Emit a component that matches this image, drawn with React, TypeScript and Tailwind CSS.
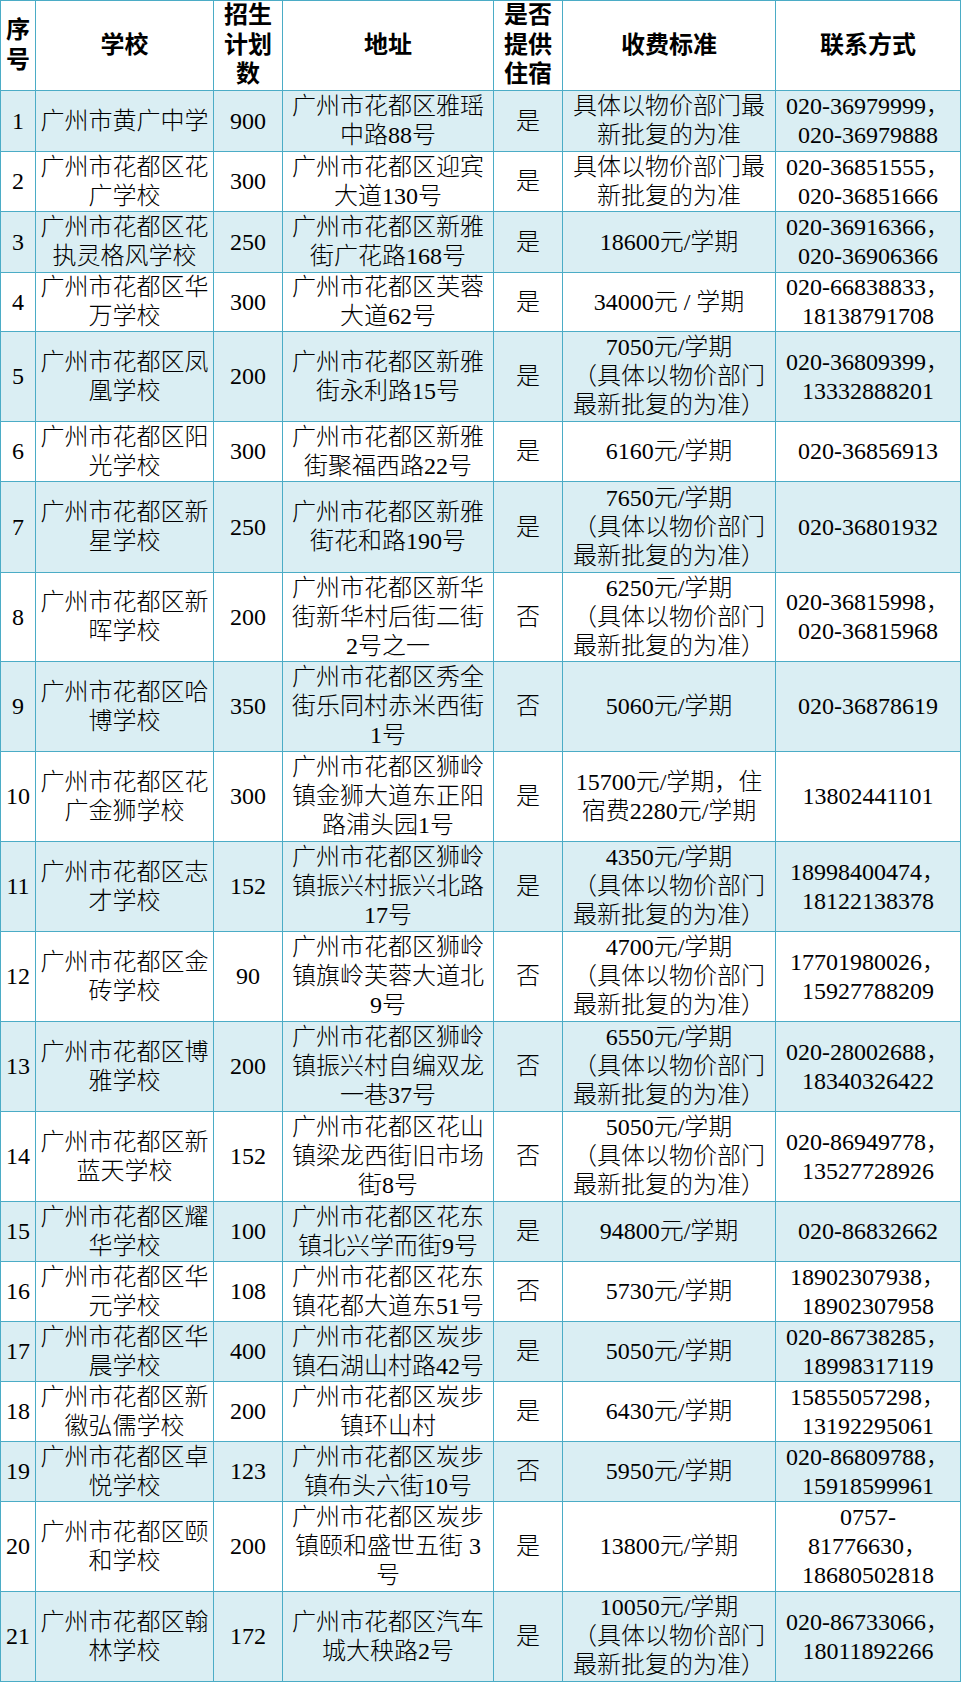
import React from "react";

type Row = {
  n: string;
  school: string[];
  plan: string;
  addr: string[];
  dorm: string;
  fee: string[];
  contact: string[];
  h: string;
};

const FEE_NOTE = ["（具体以物价部门", "最新批复的为准）"];

const rows: Row[] = [
  { n: "1", school: ["广州市黄广中学"], plan: "900", addr: ["广州市花都区雅瑶", "中路88号"], dorm: "是", fee: ["具体以物价部门最", "新批复的为准"], contact: ["020-36979999，", "020-36979888"], h: "h-[60px]" },
  { n: "2", school: ["广州市花都区花", "广学校"], plan: "300", addr: ["广州市花都区迎宾", "大道130号"], dorm: "是", fee: ["具体以物价部门最", "新批复的为准"], contact: ["020-36851555，", "020-36851666"], h: "h-[59px]" },
  { n: "3", school: ["广州市花都区花", "执灵格风学校"], plan: "250", addr: ["广州市花都区新雅", "街广花路168号"], dorm: "是", fee: ["18600元/学期"], contact: ["020-36916366，", "020-36906366"], h: "h-[60px]" },
  { n: "4", school: ["广州市花都区华", "万学校"], plan: "300", addr: ["广州市花都区芙蓉", "大道62号"], dorm: "是", fee: ["34000元 / 学期"], contact: ["020-66838833，", "18138791708"], h: "h-[58px]" },
  { n: "5", school: ["广州市花都区凤", "凰学校"], plan: "200", addr: ["广州市花都区新雅", "街永利路15号"], dorm: "是", fee: ["7050元/学期", ...FEE_NOTE], contact: ["020-36809399，", "13332888201"], h: "h-[89px]" },
  { n: "6", school: ["广州市花都区阳", "光学校"], plan: "300", addr: ["广州市花都区新雅", "街聚福西路22号"], dorm: "是", fee: ["6160元/学期"], contact: ["020-36856913"], h: "h-[59px]" },
  { n: "7", school: ["广州市花都区新", "星学校"], plan: "250", addr: ["广州市花都区新雅", "街花和路190号"], dorm: "是", fee: ["7650元/学期", ...FEE_NOTE], contact: ["020-36801932"], h: "h-[90px]" },
  { n: "8", school: ["广州市花都区新", "晖学校"], plan: "200", addr: ["广州市花都区新华", "街新华村后街二街", "2号之一"], dorm: "否", fee: ["6250元/学期", ...FEE_NOTE], contact: ["020-36815998，", "020-36815968"], h: "h-[88px]" },
  { n: "9", school: ["广州市花都区哈", "博学校"], plan: "350", addr: ["广州市花都区秀全", "街乐同村赤米西街", "1号"], dorm: "否", fee: ["5060元/学期"], contact: ["020-36878619"], h: "h-[89px]" },
  { n: "10", school: ["广州市花都区花", "广金狮学校"], plan: "300", addr: ["广州市花都区狮岭", "镇金狮大道东正阳", "路浦头园1号"], dorm: "是", fee: ["15700元/学期，住", "宿费2280元/学期"], contact: ["13802441101"], h: "h-[89px]" },
  { n: "11", school: ["广州市花都区志", "才学校"], plan: "152", addr: ["广州市花都区狮岭", "镇振兴村振兴北路", "17号"], dorm: "是", fee: ["4350元/学期", ...FEE_NOTE], contact: ["18998400474，", "18122138378"], h: "h-[89px]" },
  { n: "12", school: ["广州市花都区金", "砖学校"], plan: "90", addr: ["广州市花都区狮岭", "镇旗岭芙蓉大道北", "9号"], dorm: "否", fee: ["4700元/学期", ...FEE_NOTE], contact: ["17701980026，", "15927788209"], h: "h-[89px]" },
  { n: "13", school: ["广州市花都区博", "雅学校"], plan: "200", addr: ["广州市花都区狮岭", "镇振兴村自编双龙", "一巷37号"], dorm: "否", fee: ["6550元/学期", ...FEE_NOTE], contact: ["020-28002688，", "18340326422"], h: "h-[89px]" },
  { n: "14", school: ["广州市花都区新", "蓝天学校"], plan: "152", addr: ["广州市花都区花山", "镇梁龙西街旧市场", "街8号"], dorm: "否", fee: ["5050元/学期", ...FEE_NOTE], contact: ["020-86949778，", "13527728926"], h: "h-[89px]" },
  { n: "15", school: ["广州市花都区耀", "华学校"], plan: "100", addr: ["广州市花都区花东", "镇北兴学而街9号"], dorm: "是", fee: ["94800元/学期"], contact: ["020-86832662"], h: "h-[59px]" },
  { n: "16", school: ["广州市花都区华", "元学校"], plan: "108", addr: ["广州市花都区花东", "镇花都大道东51号"], dorm: "否", fee: ["5730元/学期"], contact: ["18902307938，", "18902307958"], h: "h-[59px]" },
  { n: "17", school: ["广州市花都区华", "晨学校"], plan: "400", addr: ["广州市花都区炭步", "镇石湖山村路42号"], dorm: "是", fee: ["5050元/学期"], contact: ["020-86738285，", "18998317119"], h: "h-[59px]" },
  { n: "18", school: ["广州市花都区新", "徽弘儒学校"], plan: "200", addr: ["广州市花都区炭步", "镇环山村"], dorm: "是", fee: ["6430元/学期"], contact: ["15855057298，", "13192295061"], h: "h-[59px]" },
  { n: "19", school: ["广州市花都区卓", "悦学校"], plan: "123", addr: ["广州市花都区炭步", "镇布头六街10号"], dorm: "否", fee: ["5950元/学期"], contact: ["020-86809788，", "15918599961"], h: "h-[59px]" },
  { n: "20", school: ["广州市花都区颐", "和学校"], plan: "200", addr: ["广州市花都区炭步", "镇颐和盛世五街 3", "号"], dorm: "是", fee: ["13800元/学期"], contact: ["0757-", "81776630，", "18680502818"], h: "h-[89px]" },
  { n: "21", school: ["广州市花都区翰", "林学校"], plan: "172", addr: ["广州市花都区汽车", "城大秧路2号"], dorm: "是", fee: ["10050元/学期", ...FEE_NOTE], contact: ["020-86733066，", "18011892266"], h: "h-[89px]" },
];

const GRID =
  "grid grid-cols-[34px_177px_68px_210px_68px_212px_184px] gap-px";

function Cell({ lines, bg, bold }: { lines: string[]; bg: string; bold?: boolean }) {
  return (
    <div
      className={`${bg} flex flex-col items-center justify-center text-center overflow-hidden ${
        bold ? "font-bold leading-[29.5px]" : "font-light leading-[29px]"
      }`}
    >
      {lines.map((l, i) => (
        <div key={i} className="whitespace-pre">
          {l}
        </div>
      ))}
    </div>
  );
}

export default function App() {
  return (
    <div className="w-[961px] bg-white">
      <div className="flex flex-col gap-px p-px bg-[#4bacc6] text-black text-[24px] font-['Liberation_Serif','Noto_Sans_CJK_SC',serif]">
        <div className={`${GRID} h-[89px]`}>
          <Cell bold bg="bg-white" lines={["序", "号"]} />
          <Cell bold bg="bg-white" lines={["学校"]} />
          <Cell bold bg="bg-white" lines={["招生", "计划", "数"]} />
          <Cell bold bg="bg-white" lines={["地址"]} />
          <Cell bold bg="bg-white" lines={["是否", "提供", "住宿"]} />
          <Cell bold bg="bg-white" lines={["收费标准"]} />
          <Cell bold bg="bg-white" lines={["联系方式"]} />
        </div>
        {rows.map((r, i) => {
          const bg = i % 2 === 0 ? "bg-[#daeef3]" : "bg-white";
          return (
            <div key={r.n} className={`${GRID} ${r.h}`}>
              <Cell bg={bg} lines={[r.n]} />
              <Cell bg={bg} lines={r.school} />
              <Cell bg={bg} lines={[r.plan]} />
              <Cell bg={bg} lines={r.addr} />
              <Cell bg={bg} lines={[r.dorm]} />
              <Cell bg={bg} lines={r.fee} />
              <Cell bg={bg} lines={r.contact} />
            </div>
          );
        })}
      </div>
    </div>
  );
}
